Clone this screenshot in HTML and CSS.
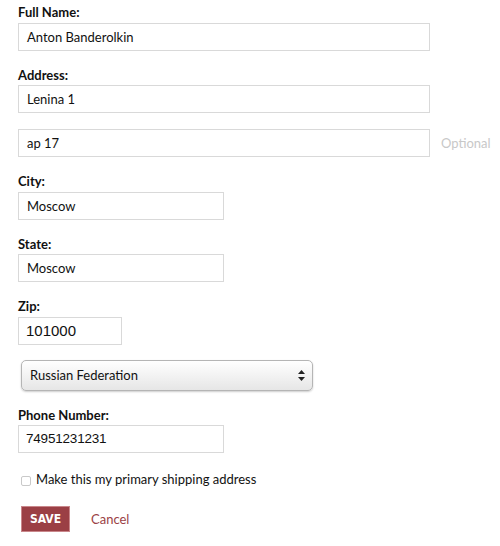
FILE: index.html
```html
<!DOCTYPE html>
<html>
<head>
<meta charset="utf-8">
<link rel="stylesheet" href="styles.css">
</head>
<body>
<form class="form">
  <div class="group">
    <label class="label">Full Name:</label>
    <div class="field field-wide">Anton Banderolkin</div>
  </div>
  <div class="group">
    <label class="label">Address:</label>
    <div class="field field-wide">Lenina 1</div>
  </div>
  <div class="group row">
    <div class="field field-wide">ap 17</div>
    <span class="optional">Optional</span>
  </div>
  <div class="group">
    <label class="label">City:</label>
    <div class="field field-mid">Moscow</div>
  </div>
  <div class="group">
    <label class="label">State:</label>
    <div class="field field-mid">Moscow</div>
  </div>
  <div class="group">
    <label class="label">Zip:</label>
    <div class="field field-short field-sys">101000</div>
  </div>
  <div class="group group-select">
    <div class="select">
      <span>Russian Federation</span>
      <svg class="arrows" width="7" height="11" viewBox="0 0 7 11"><path d="M3.5 0L7 4H0z M3.5 11L0 7h7z" fill="#222"/></svg>
    </div>
  </div>
  <div class="group">
    <label class="label">Phone Number:</label>
    <div class="field field-mid field-sys2">74951231231</div>
  </div>
  <div class="check-row">
    <span class="checkbox"></span>
    <span class="check-text">Make this my primary shipping address</span>
  </div>
  <div class="actions">
    <button type="button" class="btn-save">SAVE</button>
    <a class="cancel">Cancel</a>
  </div>
</form>
</body>
</html>
```
FILE: styles.css
```css
html, body {
  margin: 0;
  padding: 0;
  background: #fff;
}
body {
  font-family: Lato, "Open Sans", sans-serif;
  color: #222;
}
.form {
  padding: 4px 0 0 18px;
  display: flex;
  flex-direction: column;
}
.group {
  margin-bottom: 16px;
}
.group-select {
  margin-top: -1px;
}
.row {
  display: flex;
  align-items: center;
}
.label {
  display: block;
  font-weight: 700;
  font-size: 13px;
  line-height: 16px;
  margin-bottom: 2.5px;
  color: #111;
}
.field {
  box-sizing: border-box;
  height: 28px;
  border: 1px solid #d9d9d9;
  padding: 0 8px;
  font-size: 13px;
  line-height: 26px;
  color: #111;
}
.field-wide { width: 412px; }
.field-mid { width: 206px; }
.field-short { width: 104px; }
.field-sys {
  font-family: "Liberation Sans", Arial, sans-serif;
  font-size: 15px;
  padding-left: 7px;
}
.field-sys2 {
  font-family: "Liberation Sans", Arial, sans-serif;
  font-size: 13.5px;
  letter-spacing: -0.2px;
  padding-left: 7px;
}
.optional {
  margin-left: 11px;
  font-size: 13px;
  color: #c8c8c8;
}
.select {
  box-sizing: border-box;
  margin-left: 3px;
  width: 292px;
  height: 31px;
  border: 1px solid #b5b5b5;
  border-radius: 5px;
  background: linear-gradient(#ffffff, #e6e6e6);
  box-shadow: 0 1px 2px rgba(0,0,0,0.2);
  display: flex;
  align-items: center;
  justify-content: space-between;
  padding: 0 7px 0 8px;
  font-size: 13px;
  color: #111;
}
.check-row {
  display: flex;
  align-items: center;
  margin-left: 3px;
  height: 20px;
}
.checkbox {
  box-sizing: border-box;
  width: 10px;
  height: 10px;
  border: 1px solid #c9c9c9;
  border-radius: 2px;
  margin-right: 5px;
  margin-top: 3px;
}
.check-text {
  font-size: 13px;
  color: #111;
}
.actions {
  display: flex;
  align-items: center;
  margin: 17px 0 0 3px;
}
.btn-save {
  width: 49px;
  height: 26px;
  border: 1px solid #c9868a;
  background: #9b3f45;
  color: #fff;
  font-family: "DejaVu Sans Condensed", "DejaVu Sans", sans-serif;
  font-weight: 700;
  font-size: 12px;
  padding: 0;
}
.cancel {
  margin-left: 21px;
  font-size: 13px;
  color: #9b3f45;
}
```
